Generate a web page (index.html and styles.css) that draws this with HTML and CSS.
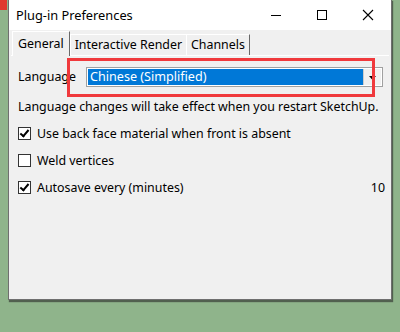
FILE: index.html
```html
<!DOCTYPE html>
<html lang="en">
<head>
    <meta charset="UTF-8">
    <title>Plug-in Preferences</title>
    <link rel="stylesheet" href="styles.css">
</head>
<body>
<div class="desktop">
    <div class="red-corner"></div>
    <div class="window">
        <div class="titlebar">
            <span class="title">Plug-in Preferences</span>
            <div class="controls">
                <span class="ctl">
                    <svg width="12" height="12" viewBox="0 0 12 12"><path d="M1 6.5H11" stroke="#000" stroke-width="1"/></svg>
                </span>
                <span class="ctl">
                    <svg width="12" height="12" viewBox="0 0 12 12"><rect x="1.5" y="1.5" width="9" height="9" fill="none" stroke="#000" stroke-width="1"/></svg>
                </span>
                <span class="ctl">
                    <svg width="12" height="12" viewBox="0 0 12 12"><path d="M1 1L11 11M11 1L1 11" stroke="#000" stroke-width="1.1"/></svg>
                </span>
            </div>
        </div>
        <div class="client">
            <div class="tabs">
                <div class="tab active">General</div>
                <div class="tab">Interactive Render</div>
                <div class="tab">Channels</div>
            </div>
            <div class="panel">
                <div class="lang-row">
                    <span class="label">Language</span>
                    <div class="select">
                        <div class="select-value">Chinese (Simplified)</div>
                        <div class="select-btn">
                            <svg width="7" height="4" viewBox="0 0 7 4"><path d="M0 0H7L3.5 4Z" fill="#000"/></svg>
                        </div>
                    </div>
                    <div class="highlight"></div>
                </div>
                <p class="note">Language changes will take effect when you restart SketchUp.</p>
                <label class="check"><span class="box on"></span>Use back face material when front is absent</label>
                <label class="check"><span class="box"></span>Weld vertices</label>
                <label class="check"><span class="box on"></span>Autosave every (minutes)<span class="num">10</span></label>
            </div>
        </div>
    </div>
</div>
</body>
</html>
```

FILE: styles.css
```css
body {
    margin: 0;
    font-family: "Noto Sans", "Open Sans", sans-serif;
    font-size: 12.4px;
    color: #000;
}
.desktop {
    position: relative;
    width: 400px;
    height: 332px;
    background-color: #8fb48b;
    overflow: hidden;
}
.red-corner {
    position: absolute;
    left: 0;
    top: 0;
    width: 7px;
    height: 10px;
    background-color: #e0392f;
}
.window {
    position: absolute;
    left: 8px;
    top: -1px;
    width: 382px;
    height: 300px;
    border: 1px solid #6f6f6f;
    border-top: none;
    background-color: #f0f0f0;
    box-shadow: 1px 2px 1px rgba(40, 40, 40, 0.6);
    display: flex;
    flex-direction: column;
}
.titlebar {
    height: 31px;
    background-color: #fff;
    display: flex;
    align-items: center;
    justify-content: space-between;
}
.title {
    padding-left: 7px;
    font-size: 12.8px;
}
.controls {
    display: flex;
    height: 100%;
}
.ctl {
    width: 46px;
    display: flex;
    align-items: center;
    justify-content: center;
}
.client {
    flex: 1;
    padding: 0 2px;
    display: flex;
    flex-direction: column;
}
.tabs {
    display: flex;
    align-items: flex-end;
    height: 25px;
    padding-left: 1px;
}
.tab {
    height: 20px;
    line-height: 20px;
    padding: 0 4px;
    border: 1px solid #a0a0a0;
    border-bottom: none;
    border-right-color: #696969;
    border-left-color: #fff;
    border-top-color: #fff;
    background-color: #f0f0f0;
    margin-left: -1px;
}
.tab.active {
    height: 24px;
    line-height: 24px;
    padding: 0 5px;
    margin-left: 0;
    margin-right: 1px;
    position: relative;
    z-index: 1;
    margin-bottom: -1px;
    background-color: #f0f0f0;
}
.panel {
    flex: 1;
    border-top: 1px solid #fff;
    padding: 0 3px 0 7px;
}
.lang-row {
    position: relative;
    display: flex;
    align-items: center;
    height: 38px;
    margin-top: 1px;
}
.label {
    width: 68px;
}
.select {
    display: flex;
    width: 297px;
    height: 20px;
    border: 1px solid #a0a0a0;
    background-color: #fff;
    padding: 1px;
    box-sizing: border-box;
    margin-top: 2px;
}
.select-value {
    flex: 1;
    background-color: #0078d7;
    color: #fff;
    line-height: 16px;
    padding-left: 2px;
    font-size: 12.6px;
}
.select-btn {
    width: 17px;
    border-left: 1px solid #ccc;
    background-color: #f0f0f0;
    display: flex;
    align-items: center;
    justify-content: center;
    padding-top: 2px;
}
.highlight {
    position: absolute;
    left: 49px;
    top: 1px;
    width: 302px;
    height: 33px;
    border: 3px solid #f0393c;
}
.note {
    margin: 4px 0 10px;
    line-height: 16px;
}
.check {
    display: flex;
    align-items: center;
    height: 16px;
    margin-bottom: 11px;
}
.box {
    width: 11px;
    height: 11px;
    border: 1px solid #333;
    background-color: #fff;
    margin-right: 6px;
    position: relative;
}
.box.on::after {
    content: "";
    position: absolute;
    left: 3px;
    top: 0;
    width: 3px;
    height: 7px;
    border: solid #000;
    border-width: 0 2px 2px 0;
    transform: rotate(40deg);
}
.num {
    margin-left: auto;
    padding-right: 1px;
}
```
